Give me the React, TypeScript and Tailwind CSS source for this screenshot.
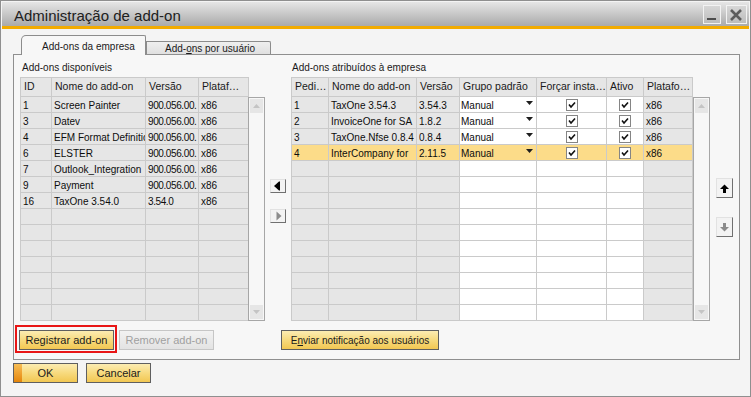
import React from 'react';

type Tone = 'g' | 'w';
type Col = { w: string; label: string; tone: Tone };

const leftCols: Col[] = [
  { w: 'w-[31px]', label: 'ID', tone: 'g' },
  { w: 'w-[94px]', label: 'Nome do add-on', tone: 'g' },
  { w: 'w-[53px]', label: 'Versão', tone: 'g' },
  { w: 'w-[50px]', label: 'Plataf…', tone: 'g' },
];

const rightCols: Col[] = [
  { w: 'w-[37px]', label: 'Pedi…', tone: 'g' },
  { w: 'w-[88px]', label: 'Nome do add-on', tone: 'g' },
  { w: 'w-[43px]', label: 'Versão', tone: 'g' },
  { w: 'w-[77px]', label: 'Grupo padrão', tone: 'w' },
  { w: 'w-[70px]', label: 'Forçar insta…', tone: 'w' },
  { w: 'w-[37px]', label: 'Ativo', tone: 'w' },
  { w: 'w-[49px]', label: 'Platafo…', tone: 'g' },
];

const available = [
  ['1', 'Screen Painter', '900.056.00.', 'x86'],
  ['3', 'Datev', '900.056.00.', 'x86'],
  ['4', 'EFM Format Definitio', '900.056.00.', 'x86'],
  ['6', 'ELSTER', '900.056.00.', 'x86'],
  ['7', 'Outlook_Integration', '900.056.00.', 'x86'],
  ['9', 'Payment', '900.056.00.', 'x86'],
  ['16', 'TaxOne 3.54.0', '3.54.0', 'x86'],
];

const assigned = [
  ['1', 'TaxOne 3.54.3', '3.54.3'],
  ['2', 'InvoiceOne for SA', '1.8.2'],
  ['3', 'TaxOne.Nfse 0.8.4', '0.8.4'],
  ['4', 'InterCompany for', '2.11.5'],
];

const ROWS = 14;

const Check = () => (
  <svg width="12" height="12" viewBox="0 0 12 12">
    <rect x="0.5" y="0.5" width="11" height="11" fill="#fff" stroke="#858585" />
    <path d="M3 5.6 L5 8 L9 3.4" fill="none" stroke="#111" strokeWidth="1.6" />
  </svg>
);

const DropArrow = () => (
  <svg width="7" height="4" viewBox="0 0 7 4" className="mt-[4px]">
    <path d="M0 0H7L3.5 4Z" fill="#1e1e1e" />
  </svg>
);

const HeaderCell = ({ col }: { col: Col }) => (
  <div className={`${col.w} h-[19px] shrink-0 border-r border-b border-[#cacaca] bg-[#e6e6e6] pl-[3px] text-[10.5px] leading-[16px] overflow-hidden whitespace-nowrap`}>
    {col.label}
  </div>
);

const Cell = ({ w, bg, children, className = '' }: { w: string; bg: string; children?: React.ReactNode; className?: string }) => (
  <div className={`${w} ${bg} h-[16px] shrink-0 border-r border-b border-[#cacaca] overflow-hidden whitespace-nowrap text-[10px] leading-[17px] text-[#0d0d0d] ${className}`}>
    {children}
  </div>
);

const ScrollBar = ({ className = '' }: { className?: string }) => (
  <div className={`w-[17px] h-[224px] border border-[#a6a6a6] bg-[#f7f7f7] p-px flex flex-col justify-between ${className}`}>
    <div className="h-[14px] bg-[#e6e6e6] flex items-center justify-center">
      <svg width="7" height="4" viewBox="0 0 7 4"><path d="M0 4H7L3.5 0Z" fill="#c4c4c4" /></svg>
    </div>
    <div className="h-[14px] bg-[#e6e6e6] flex items-center justify-center">
      <svg width="7" height="4" viewBox="0 0 7 4"><path d="M0 0H7L3.5 4Z" fill="#c4c4c4" /></svg>
    </div>
  </div>
);

const LeftTable = () => (
  <div className="border-l border-t border-[#cacaca]">
    <div className="flex">
      {leftCols.map((c) => <HeaderCell key={c.label} col={c} />)}
    </div>
    {Array.from({ length: ROWS }).map((_, r) => (
      <div key={r} className="flex">
        {leftCols.map((c, i) => (
          <Cell key={i} w={c.w} bg="bg-[#e6e6e6]" className={i === 2 ? 'pl-[2px] tracking-[-0.4px]' : 'pl-[2px]'}>
            {available[r]?.[i]}
          </Cell>
        ))}
      </div>
    ))}
  </div>
);

const RightTable = () => (
  <div className="border-l border-t border-[#cacaca]">
    <div className="flex">
      {rightCols.map((c) => <HeaderCell key={c.label} col={c} />)}
    </div>
    {Array.from({ length: ROWS }).map((_, r) => {
      const row = assigned[r];
      const sel = r === 3;
      return (
        <div key={r} className="flex">
          {rightCols.map((c, i) => {
            const bg = sel ? 'bg-[#fcdc89]' : c.tone === 'w' ? 'bg-white' : 'bg-[#e6e6e6]';
            if (!row) return <Cell key={i} w={c.w} bg={bg} />;
            if (i === 3)
              return (
                <Cell key={i} w={c.w} bg={bg} className="pl-[1px] pr-[3px] flex justify-between">
                  <span>Manual</span>
                  <DropArrow />
                </Cell>
              );
            if (i === 4 || i === 5)
              return (
                <Cell key={i} w={c.w} bg={bg} className="flex items-center justify-center">
                  <Check />
                </Cell>
              );
            return (
              <Cell key={i} w={c.w} bg={bg} className="pl-[2px]">
                {i === 6 ? 'x86' : row[i]}
              </Cell>
            );
          })}
        </div>
      );
    })}
  </div>
);

const SmallBtn = ({ children, className = '' }: { children: React.ReactNode; className?: string }) => (
  <div className={`flex items-center justify-center bg-[#f3f3f3] border border-t-[#e2e2e2] border-l-[#e2e2e2] border-r-[#707070] border-b-[#707070] ${className}`}>
    {children}
  </div>
);

const YellowBtn = ({ children, className = '' }: { children: React.ReactNode; className?: string }) => (
  <div className={`relative h-[20px] flex items-center justify-center border border-[#5f5f5f] bg-[linear-gradient(to_bottom,#fcecb2,#f7da7e_50%,#f2c752)] text-[#1b1b1b] whitespace-nowrap ${className}`}>
    {children}
  </div>
);

export default function App() {
  return (
    <div className="w-[751px] h-[397px] border border-[#8f8f8f] bg-[#f4f4f4] font-['Liberation_Sans',Arial,sans-serif] text-[#1a1a1a] overflow-hidden flex flex-col">
      {/* title bar */}
      <div className="mx-px mt-px h-[24px] shrink-0 bg-[linear-gradient(to_bottom,#e6e6e6,#aaaaaa)] flex items-start justify-between">
        <div className="pl-[12px] pt-[5px] text-[15px] leading-[17px] text-[#202020]">Administração de add-on</div>
        <div className="flex gap-[5px] pt-[3px] pr-[2px]">
          <div className="w-[18px] h-[19px] border border-[#f2f2f2] bg-[linear-gradient(to_bottom,#d6d6d6,#bdbdbd)]">
            <svg width="16" height="17" viewBox="0 0 16 17"><rect x="3" y="12" width="9" height="2" fill="#4d4d4d" /></svg>
          </div>
          <div className="w-[21px] h-[19px] border border-[#f2f2f2] bg-[linear-gradient(to_bottom,#d6d6d6,#bdbdbd)]">
            <svg width="19" height="17" viewBox="0 0 19 17">
              <path d="M4 4 L14 14 M14 4 L4 14" stroke="#5c5c5c" strokeWidth="2.6" />
            </svg>
          </div>
        </div>
      </div>
      <div className="mx-px h-[3px] shrink-0 bg-[#f2ab00]" />

      <div className="ml-[12px] mt-[6px] w-[727px]">
        {/* tabs */}
        <div className="flex items-end h-[19px] pl-[8px]">
          <div className="relative z-10 -mb-px h-[20px] w-[125px] border border-b-0 border-[#8c8c8c] rounded-tl-[5px] rounded-tr-[2px] bg-[#f7f7f7] pl-[20px] pt-[5px] text-[10px] leading-[12px]">
            Add-ons da empresa
          </div>
          <div className="h-[13px] w-[125px] border border-b-0 border-[#8c8c8c] rounded-tr-[2px] bg-[linear-gradient(to_bottom,#efefef,#e0e0e0)] pl-[18px] text-[10px] leading-[13px]">
            Add-<span className="underline">o</span>ns por usuário
          </div>
        </div>

        {/* panel */}
        <div className="h-[306px] border border-[#8f8f8f] bg-[#f7f7f7] flex flex-col">
          <div className="flex pt-[7px] pl-[6px]">
            <div className="flex flex-col">
              <div className="h-[15px] pl-[2px] text-[10px] leading-[12px]">Add-ons disponíveis</div>
              <div className="flex items-start">
                <LeftTable />
                <ScrollBar className="mt-[20px] -ml-px" />
              </div>
            </div>

            <div className="w-[26px] pl-[5px] pt-[117px] flex flex-col">
              <SmallBtn className="w-[16px] h-[14px]">
                <svg width="14" height="12" viewBox="0 0 14 12"><path d="M8 1.5 L3 6 L8 10.5Z" fill="#000" /><rect x="8" y="1.5" width="1" height="9" fill="#000" /></svg>
              </SmallBtn>
              <SmallBtn className="w-[16px] h-[14px] mt-[16px]">
                <svg width="14" height="12" viewBox="0 0 14 12"><path d="M5.5 1.5 L10.5 6 L5.5 10.5Z" fill="#8c8c8c" /></svg>
              </SmallBtn>
            </div>

            <div className="flex flex-col">
              <div className="h-[15px] pl-[1px] text-[10px] leading-[12px]">Add-ons atribuídos à empresa</div>
              <div className="flex items-start">
                <RightTable />
                <ScrollBar className="mt-[20px]" />
              </div>
            </div>

            <div className="pl-[6px] pt-[116px] flex flex-col">
              <SmallBtn className="w-[17px] h-[20px]">
                <svg width="15" height="18" viewBox="0 0 15 18"><path d="M3 10 L7.5 5.5 L12 10Z" fill="#000" /><rect x="6" y="10" width="3" height="4" fill="#000" /></svg>
              </SmallBtn>
              <SmallBtn className="w-[17px] h-[20px] mt-[19px]">
                <svg width="15" height="18" viewBox="0 0 15 18"><rect x="6" y="5" width="3" height="4" fill="#8a8a8a" /><path d="M3 9 L12 9 L7.5 13.5Z" fill="#8a8a8a" /></svg>
              </SmallBtn>
            </div>
          </div>

          <div className="flex items-start mt-[4px] pl-[1px]">
            <div className="w-[102px] h-[28px] border-2 border-[#e81515] pl-[2px] pt-[3px]">
              <YellowBtn className="w-[95px] text-[11px]">Registrar add-on</YellowBtn>
            </div>
            <div className="ml-[2px] mt-[5px] w-[95px] h-[20px] flex items-center justify-center border border-[#c6c6c6] bg-[linear-gradient(to_bottom,#f2f2f2,#e3e3e3)] text-[11px] text-[#a0a0a0]">
              Remover add-on
            </div>
            <YellowBtn className="ml-[67px] mt-[5px] w-[158px] text-[10px]">
              <span>E<span className="underline">n</span>viar notificação aos usuários</span>
            </YellowBtn>
          </div>
        </div>

        {/* footer buttons */}
        <div className="flex gap-[8px] mt-[3px]">
          <YellowBtn className="w-[65px] h-[19px] text-[11px]">
            <span className="absolute left-0 top-0 bottom-0 w-[8px] bg-[linear-gradient(to_bottom,#f7bd55,#e5860c)]" />
            OK
          </YellowBtn>
          <YellowBtn className="w-[65px] h-[19px] text-[11px]">Cancelar</YellowBtn>
        </div>
      </div>
    </div>
  );
}
